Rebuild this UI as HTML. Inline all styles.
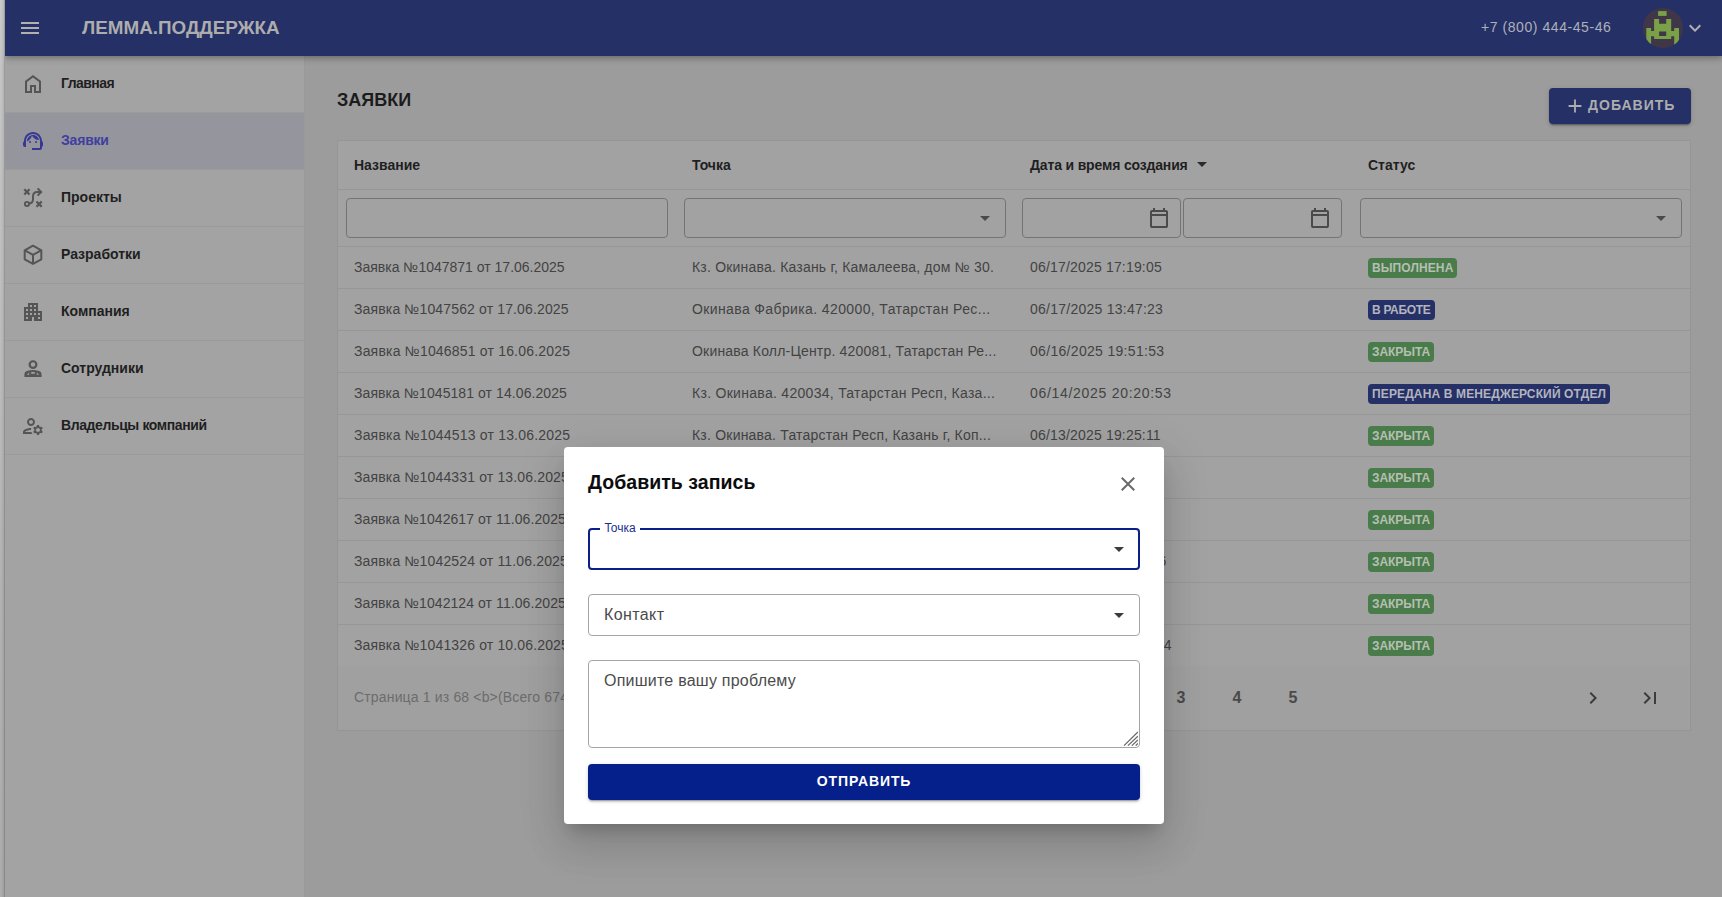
<!DOCTYPE html>
<html lang="ru">
<head>
<meta charset="utf-8">
<title>ЛЕММА.ПОДДЕРЖКА</title>
<style>
*{box-sizing:border-box;margin:0;padding:0}
html,body{width:1722px;height:897px;overflow:hidden}
body{font-family:"Liberation Sans",sans-serif;position:relative;
 background:linear-gradient(to right,rgba(0,0,0,0) 0,rgba(0,0,0,.030) 2px,rgba(0,0,0,.100) 4px,rgba(0,0,0,.220) 4px,rgba(0,0,0,.220) 5px,rgba(0,0,0,0) 5px),linear-gradient(to bottom,#cbcbcb 0,#c7c7c7 60px,#c1c1c1 250px,#b3b3b3 620px,#aeaeae 897px);}
.abs{position:absolute}
#app{position:absolute;left:5px;top:0;width:1717px;height:897px;background:#9c9c9c;overflow:hidden}
/* header */
#hdr{position:absolute;left:0;top:0;width:1717px;height:56px;background:#253166;z-index:5;
 box-shadow:0 2px 4px -1px rgba(0,0,0,.16),0 4px 5px 0 rgba(0,0,0,.11),0 1px 10px 0 rgba(0,0,0,.09)}
#hdr .title{position:absolute;left:76.500px;top:16px;font-weight:700;font-size:17.500px;line-height:24px;letter-spacing:0;transform:scaleX(1.076);transform-origin:0 50%;color:#adadad;white-space:nowrap}
#hdr .phone{position:absolute;left:1476px;top:17px;font-size:14px;line-height:20px;letter-spacing:.560px;color:#aeb0bb;white-space:nowrap}
/* sidebar */
#side{position:absolute;left:0;top:56px;width:300px;height:841px;background:#a3a3a3;border-right:1px solid #999}
.nav{position:absolute;left:0;width:299px;height:57px;border-bottom:1px solid #9b9b9b}
.nav.act{background:#95959e}
.nav svg{position:absolute;left:16px;top:16px;width:24px;height:24px;fill:#555}
.nav.act svg{fill:#373795}
.nav span{position:absolute;left:56px;top:17px;font-size:14px;line-height:20px;font-weight:700;color:#1f1f1f;white-space:nowrap}
.nav.act span{color:#3f3f9e}
/* main */
#ptitle{position:absolute;left:332px;top:88px;font-size:18px;line-height:24px;font-weight:700;color:#1c1c1c}
#addbtn{position:absolute;left:1544px;top:88px;width:142px;height:36px;border-radius:4px;background:#253166;
 box-shadow:0 3px 1px -2px rgba(0,0,0,.2),0 2px 2px 0 rgba(0,0,0,.14),0 1px 5px 0 rgba(0,0,0,.12)}
#addbtn span{position:absolute;left:39px;top:7px;font-size:14px;line-height:20px;font-weight:700;letter-spacing:1.020px;color:#adadad;white-space:nowrap}
#card{position:absolute;left:332px;top:140px;width:1354px;height:591px;background:#a2a2a2;border:1px solid #959595}
.hl{position:absolute;left:0;width:1352px;height:1px;background:#979797}
.th{position:absolute;top:13.500px;font-size:14px;line-height:20px;font-weight:700;color:#1f1f1f;white-space:nowrap}
.inp{position:absolute;top:57px;height:40px;border:1px solid #747474;border-radius:4px}
.c2{letter-spacing:.200px}.c3{letter-spacing:.180px}
.td{position:absolute;font-size:14px;line-height:20px;color:#434343;white-space:nowrap}
.bdg{position:absolute;left:1030px;height:20px;border-radius:4px;padding:0 4px;font-size:12px;line-height:20px;font-weight:700;color:#b7bfb3;white-space:nowrap;letter-spacing:.1px}
.bdg.g{background:#497c4a}
.bdg.b{background:#253067;color:#b3b4be}
#foot{position:absolute;left:0;top:525px;width:1352px;height:64px;background:#a0a0a0}
.pg{position:absolute;top:20px;width:40px;text-align:center;font-size:16px;line-height:24px;font-weight:700;color:#4a4a4a}
/* dialog */
#dlg{position:absolute;left:559px;top:447px;width:600px;height:377px;background:#fff;border-radius:4px;z-index:10;
 box-shadow:0 11px 15px -7px rgba(0,0,0,.2),0 24px 38px 3px rgba(0,0,0,.095),0 9px 46px 8px rgba(0,0,0,.075)}
#dlg .dt{position:absolute;left:24px;top:20.500px;font-size:19.500px;line-height:28px;letter-spacing:.050px;font-weight:700;color:#0c0c0c;white-space:nowrap}
.f{position:absolute;left:24px;width:552px;border-radius:4px}
.f1{top:81px;height:42px;border:2px solid #0a1f8a}
.f1 .lb{position:absolute;left:10px;top:-10px;width:40px;height:16px;background:#fff;font-size:12px;line-height:16px;color:#1a2c93;text-align:center}
.f2{top:147px;height:42px;border:1px solid #a4a4a4}
.f3{top:213px;height:87.600px;border:1px solid #a4a4a4}
.ft{position:absolute;left:15px;font-size:16px;line-height:24px;color:#4b4b4b;white-space:nowrap}
#send{position:absolute;left:24px;top:317px;width:552px;height:36px;border-radius:4px;background:#05208a;color:#fff;
 font-size:14px;line-height:34px;font-weight:700;letter-spacing:.900px;text-align:center;
 box-shadow:0 3px 1px -2px rgba(0,0,0,.2),0 2px 2px 0 rgba(0,0,0,.14),0 1px 5px 0 rgba(0,0,0,.12)}
</style>
</head>
<body>
<div id="app">
<div id="hdr">
<svg class="abs" style="left:13px;top:16px" width="24" height="24" viewBox="0 0 24 24"><path fill="#b0b0b0" d="M3,6H21V8H3V6M3,11H21V13H3V11M3,16H21V18H3V16Z"/></svg>
<div class="title">ЛЕММА.ПОДДЕРЖКА</div>
<div class="phone">+7 (800) 444-45-46</div>
<svg class="abs" style="left:1638px;top:8px" width="40" height="40" viewBox="0 0 40 40">
<defs><clipPath id="avc"><circle cx="20" cy="20" r="20"/></clipPath></defs>
<circle cx="20" cy="20" r="20" fill="#3f3648"/>
<g clip-path="url(#avc)" fill="#7ba148">
<rect x="15.100" y="3.100" width="8.500" height="4.800"/>
<path d="M11.100 11.100h5v4.700h7.100v-4.700h5v11.800h3v-2.800h4.800V40h-4.800V28.300h-3V31.100H11.100V28.300h-3V40H3.300V20.100H8.100v2.800h3ZM16.100 23.600v4.300h7.100v-4.300Z" fill-rule="evenodd"/>
</g></svg>
<svg class="abs" style="left:1678px;top:16px" width="24" height="24" viewBox="0 0 24 24"><path fill="#b0b0b0" d="M7.41,8.58L12,13.17L16.59,8.58L18,10L12,16L6,10L7.41,8.58Z"/></svg>
</div>
<div id="side">
<div class="nav" style="top:0px"><svg viewBox="0 0 24 24"><path d="M6 19h3v-6h6v6h3v-9l-6-4.5L6 10Zm-2 2V9l8-6 8 6v12h-7v-6h-2v6Z"/></svg><span style="letter-spacing:-.550px">Главная</span></div>
<div class="nav act" style="top:57px"><svg viewBox="0 0 24 24"><path d="M21 12.22C21 6.73 16.74 3 12 3c-4.69 0-9 3.65-9 9.28-.6.34-1 .98-1 1.72v2c0 1.1.9 2 2 2h1v-6.1c0-3.87 3.13-7 7-7s7 3.13 7 7V19h-8v2h8c1.1 0 2-.9 2-2v-1.220c.59-.31 1-.92 1-1.64v-2.3c0-.7-.41-1.31-1-1.620z"/><circle cx="9" cy="13" r="1"/><circle cx="15" cy="13" r="1"/><path d="M18 11.03C17.52 8.18 15.04 6 12.05 6c-3.03 0-6.29 2.51-6.03 6.45 2.47-1.01 4.33-3.21 4.860-5.890 1.310 2.630 4 4.440 7.120 4.470z"/></svg><span style="letter-spacing:-.200px">Заявки</span></div>
<div class="nav" style="top:114px"><svg viewBox="0 0 24 24"><g fill="none" stroke="#555" stroke-width="2"><path stroke-width="2.300" d="M3.300 3.300l5.200 5.200M8.500 3.300l-5.200 5.200M15.500 15.500l5.200 5.200M20.700 15.500l-5.200 5.200"/><circle cx="6" cy="18" r="2.100" stroke-width="1.900"/><path d="M8.200 17.600C11 17.200 12 15.700 12 13.200V10.500C12 7.600 13.500 6 16.200 6H19.600"/><path d="M16.600 2.400L20.200 6l-3.600 3.600"/></g></svg><span>Проекты</span></div>
<div class="nav" style="top:171px"><svg viewBox="0 0 24 24"><g fill="none" stroke="#555" stroke-width="2" stroke-linejoin="round"><path d="M12 2.700l8.300 4.600v9L12 20.900l-8.300-4.600v-9Z"/><path d="M3.900 7.400L12 11.900l8.100-4.500M12 11.900v8.800"/></g></svg><span>Разработки</span></div>
<div class="nav" style="top:228px"><svg viewBox="0 0 24 24"><path d="M17 11V3H7v4H3v14h8v-4h2v4h8V11h-4zM7 19H5v-2h2v2zm0-4H5v-2h2v2zm0-4H5V9h2v2zm4 4H9v-2h2v2zm0-4H9V9h2v2zm0-4H9V5h2v2zm4 8h-2v-2h2v2zm0-4h-2V9h2v2zm0-4h-2V5h2v2zm4 12h-2v-2h2v2zm0-4h-2v-2h2v2z"/></svg><span>Компания</span></div>
<div class="nav" style="top:285px"><svg viewBox="0 0 24 24"><circle cx="12" cy="7.600" r="3.350" fill="none" stroke="#555" stroke-width="2.200"/><path fill-rule="evenodd" d="M3.400 20v-2.800c0-1.500 1-2.600 2.600-3.200C7.900 13.300 9.900 13 12 13s4.100.300 6 1c1.600.600 2.600 1.700 2.600 3.200V20ZM10.200 15h3.600v1.800h-3.600ZM5.800 17.800l2.400-2.400v2.400ZM18.200 17.800l-2.400-2.400v2.400Z"/></svg><span>Сотрудники</span></div>
<div class="nav" style="top:342px"><svg viewBox="0 0 24 24"><path d="M10 12c2.210 0 4-1.790 4-4s-1.790-4-4-4-4 1.790-4 4 1.790 4 4 4zm0-6c1.100 0 2 .900 2 2s-.900 2-2 2-2-.900-2-2 .900-2 2-2z"/><path d="M4 18c.220-.720 3.310-2 6-2 0-.700.130-1.370.350-1.990C7.620 13.910 2 15.270 2 18v2h9.540c-.500-.580-.900-1.250-1.170-2H4z"/><path d="M20.750 16c0-.220-.030-.420-.060-.630l1.140-1.010-1-1.730-1.450.490c-.320-.270-.680-.480-1.080-.630L18 11h-2l-.300 1.490c-.400.150-.760.360-1.080.630l-1.450-.490-1 1.730 1.140 1.010c-.030.210-.060.410-.060.630s.030.420.060.630l-1.140 1.010 1 1.730 1.450-.490c.320.270.680.480 1.080.630L16 21h2l.300-1.490c.400-.150.760-.360 1.080-.630l1.450.490 1-1.730-1.140-1.010c.030-.210.060-.410.060-.630zM17 18c-1.100 0-2-.900-2-2s.900-2 2-2 2 .900 2 2-.900 2-2 2z"/></svg><span style="letter-spacing:-.400px">Владельцы компаний</span></div>
</div>
<div id="ptitle">ЗАЯВКИ</div>
<div id="addbtn"><svg class="abs" style="left:15px;top:7px" width="22" height="22" viewBox="0 0 24 24"><path fill="#adadad" d="M11 13H5v-2h6V5h2v6h6v2h-6v6h-2Z"/></svg><span>ДОБАВИТЬ</span></div>
<div id="card">
<div id="foot"></div>
<div class="th" style="left:16px">Название</div>
<div class="th" style="left:354px">Точка</div>
<div class="th" style="left:692px;letter-spacing:-.160px">Дата и время создания</div>
<div class="th" style="left:1030px">Статус</div>
<svg class="abs" style="left:852px;top:11px" width="24" height="24" viewBox="0 0 24 24"><path fill="#2a2a2a" d="M7,10L12,15L17,10H7Z"/></svg>
<div class="hl" style="top:48px"></div>
<div class="hl" style="top:105px"></div>
<div class="inp" style="left:8px;width:322px"></div>
<div class="inp" style="left:346px;width:322px"></div>
<div class="inp" style="left:684px;width:158.800px"></div>
<div class="inp" style="left:845.100px;width:158.900px"></div>
<div class="inp" style="left:1022px;width:322px"></div>
<svg class="abs" style="left:635px;top:65px" width="24" height="24" viewBox="0 0 24 24"><path fill="#4a4a4a" d="M7,10L12,15L17,10H7Z"/></svg>
<svg class="abs" style="left:1311px;top:65px" width="24" height="24" viewBox="0 0 24 24"><path fill="#4a4a4a" d="M7,10L12,15L17,10H7Z"/></svg>
<svg class="abs" style="left:809px;top:65px" width="24" height="24" viewBox="0 0 24 24"><path fill="#4a4a4a" d="M5 22q-.825 0-1.413-.588T3 20V6q0-.825.588-1.413T5 4h1V2h2v2h8V2h2v2h1q.825 0 1.413.588T21 6v14q0 .825-.588 1.413T19 22Zm0-2h14V10H5v10ZM5 8h14V6H5v2Z"/></svg>
<svg class="abs" style="left:970px;top:65px" width="24" height="24" viewBox="0 0 24 24"><path fill="#4a4a4a" d="M5 22q-.825 0-1.413-.588T3 20V6q0-.825.588-1.413T5 4h1V2h2v2h8V2h2v2h1q.825 0 1.413.588T21 6v14q0 .825-.588 1.413T19 22Zm0-2h14V10H5v10ZM5 8h14V6H5v2Z"/></svg>
<div class="td" style="letter-spacing:0.000px;left:16px;top:116px">Заявка №1047871 от 17.06.2025</div>
<div class="td" style="letter-spacing:0.200px;left:354px;top:116px">Кз. Окинава. Казань г, Камалеева, дом № 30.</div>
<div class="td" style="letter-spacing:0.180px;left:692px;top:116px">06/17/2025 17:19:05</div>
<div class="bdg g" style="top:117px">ВЫПОЛНЕНА</div>
<div class="hl" style="top:147px"></div>
<div class="td" style="letter-spacing:0.140px;left:16px;top:158px">Заявка №1047562 от 17.06.2025</div>
<div class="td" style="letter-spacing:0.380px;left:354px;top:158px">Окинава Фабрика. 420000, Татарстан Рес...</div>
<div class="td" style="letter-spacing:0.247px;left:692px;top:158px">06/17/2025 13:47:23</div>
<div class="bdg b" style="letter-spacing:-.300px;top:159px">В РАБОТЕ</div>
<div class="hl" style="top:189px"></div>
<div class="td" style="letter-spacing:0.190px;left:16px;top:200px">Заявка №1046851 от 16.06.2025</div>
<div class="td" style="letter-spacing:0.190px;left:354px;top:200px">Окинава Колл-Центр. 420081, Татарстан Ре...</div>
<div class="td" style="letter-spacing:0.313px;left:692px;top:200px">06/16/2025 19:51:53</div>
<div class="bdg g" style="letter-spacing:-.050px;top:201px">ЗАКРЫТА</div>
<div class="hl" style="top:231px"></div>
<div class="td" style="letter-spacing:0.080px;left:16px;top:242px">Заявка №1045181 от 14.06.2025</div>
<div class="td" style="letter-spacing:0.290px;left:354px;top:242px">Кз. Окинава. 420034, Татарстан Респ, Каза...</div>
<div class="td" style="letter-spacing:0.700px;left:692px;top:242px">06/14/2025 20:20:53</div>
<div class="bdg b" style="letter-spacing:.135px;top:243px">ПЕРЕДАНА В МЕНЕДЖЕРСКИЙ ОТДЕЛ</div>
<div class="hl" style="top:273px"></div>
<div class="td" style="letter-spacing:0.190px;left:16px;top:284px">Заявка №1044513 от 13.06.2025</div>
<div class="td" style="letter-spacing:0.210px;left:354px;top:284px">Кз. Окинава. Татарстан Респ, Казань г, Коп...</div>
<div class="td" style="letter-spacing:0.180px;left:692px;top:284px">06/13/2025 19:25:11</div>
<div class="bdg g" style="letter-spacing:-.050px;top:285px">ЗАКРЫТА</div>
<div class="hl" style="top:315px"></div>
<div class="td" style="letter-spacing:0.150px;left:16px;top:326px">Заявка №1044331 от 13.06.2025</div>
<div class="td" style="letter-spacing:0.210px;left:354px;top:326px">Кз. Окинава. Татарстан Респ, Казань г, Коп...</div>
<div class="td" style="letter-spacing:0.180px;left:692px;top:326px">06/13/2025 15:17:31</div>
<div class="bdg g" style="letter-spacing:-.050px;top:327px">ЗАКРЫТА</div>
<div class="hl" style="top:357px"></div>
<div class="td" style="letter-spacing:0.080px;left:16px;top:368px">Заявка №1042617 от 11.06.2025</div>
<div class="td" style="letter-spacing:0.380px;left:354px;top:368px">Окинава Фабрика. 420000, Татарстан Рес...</div>
<div class="td" style="letter-spacing:0.180px;left:692px;top:368px">06/11/2025 17:11:17</div>
<div class="bdg g" style="letter-spacing:-.050px;top:369px">ЗАКРЫТА</div>
<div class="hl" style="top:399px"></div>
<div class="td" style="letter-spacing:0.150px;left:16px;top:410px">Заявка №1042524 от 11.06.2025</div>
<div class="td" style="letter-spacing:0.190px;left:354px;top:410px">Окинава Колл-Центр. 420081, Татарстан Ре...</div>
<div class="td" style="letter-spacing:0.180px;left:692px;top:410px">06/11/2025 16:09:46</div>
<div class="bdg g" style="letter-spacing:-.050px;top:411px">ЗАКРЫТА</div>
<div class="hl" style="top:441px"></div>
<div class="td" style="letter-spacing:0.080px;left:16px;top:452px">Заявка №1042124 от 11.06.2025</div>
<div class="td" style="letter-spacing:0.200px;left:354px;top:452px">Кз. Окинава. Казань г, Камалеева, дом № 30.</div>
<div class="td" style="letter-spacing:0.180px;left:692px;top:452px">06/11/2025 11:11:11</div>
<div class="bdg g" style="letter-spacing:-.050px;top:453px">ЗАКРЫТА</div>
<div class="hl" style="top:483px"></div>
<div class="td" style="letter-spacing:0.150px;left:16px;top:494px">Заявка №1041326 от 10.06.2025</div>
<div class="td" style="letter-spacing:0.290px;left:354px;top:494px">Кз. Окинава. 420034, Татарстан Респ, Каза...</div>
<div class="td" style="letter-spacing:0.180px;left:692px;top:494px">06/10/2025 20:20:54</div>
<div class="bdg g" style="letter-spacing:-.050px;top:495px">ЗАКРЫТА</div>
<div class="td" style="left:825.700px;top:494px">4</div>
<div class="td" style="left:820.500px;top:410px">6</div>
<div class="td" style="left:16px;top:546px;color:#6c6c6c;letter-spacing:.160px">Страница 1 из 68 &lt;b&gt;(Всего 674 элементов)&lt;/b&gt;</div>
<div class="pg" style="left:711px;top:545px">1</div>
<div class="pg" style="left:767px;top:545px">2</div>
<div class="pg" style="left:823px;top:545px">3</div>
<div class="pg" style="left:879px;top:545px">4</div>
<div class="pg" style="left:935px;top:545px">5</div>
<svg class="abs" style="left:1243px;top:545px" width="24" height="24" viewBox="0 0 24 24"><path fill="#3c3c3c" d="M8.59,16.58L13.17,12L8.59,7.41L10,6L16,12L10,18L8.59,16.58Z"/></svg>
<svg class="abs" style="left:1299.6px;top:545px" width="24" height="24" viewBox="0 0 24 24"><path fill="#3c3c3c" d="M5.59,7.41L10.18,12L5.59,16.59L7,18L13,12L7,6L5.59,7.41M16,6H18V18H16V6Z"/></svg>
</div>
<div id="dlg">
<div class="dt">Добавить запись</div>
<svg class="abs" style="left:552px;top:25px" width="24" height="24" viewBox="0 0 24 24"><path fill="#6a6a6a" d="M19,6.41L17.59,5L12,10.59L6.41,5L5,6.41L10.59,12L5,17.59L6.41,19L12,13.41L17.59,19L19,17.59L13.41,12L19,6.41Z"/></svg>
<div class="f f1"><div class="lb">Точка</div></div>
<svg class="abs" style="left:543px;top:89.500px" width="24" height="24" viewBox="0 0 24 24"><path fill="#3c3c3c" d="M7,10L12,15L17,10H7Z"/></svg>
<div class="f f2"><div class="ft" style="top:7.500px;letter-spacing:.400px">Контакт</div></div>
<svg class="abs" style="left:543px;top:156px" width="24" height="24" viewBox="0 0 24 24"><path fill="#3c3c3c" d="M7,10L12,15L17,10H7Z"/></svg>
<div class="f f3"><div class="ft" style="top:7.500px;letter-spacing:.230px">Опишите вашу проблему</div>
<svg class="abs" style="right:1px;bottom:1px" width="15" height="15" viewBox="0 0 15 15"><path d="M1 14.600L14.900 1M4.900 14.600L14.900 5.200M8.800 14.600L14.900 9M12.700 14.600L14.900 12.400" stroke="#6a6a6a" stroke-width="1.250" fill="none"/></svg>
</div>
<div id="send">ОТПРАВИТЬ</div>
</div>
</div>
</body>
</html>
